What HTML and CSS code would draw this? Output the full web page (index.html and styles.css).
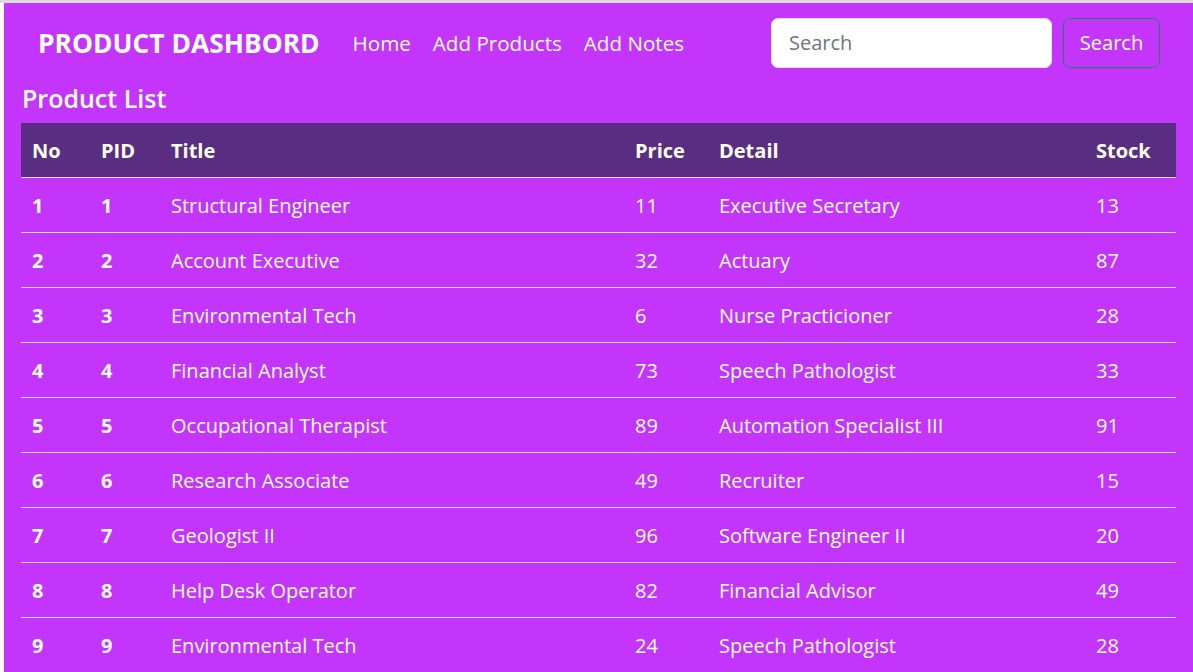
FILE: index.html
```html
<!DOCTYPE html>
<html>
<head>
<meta charset="utf-8">
<link rel="stylesheet" href="styles.css">
</head>
<body>
<div class="topline"></div>
<div class="page">
  <nav class="navbar">
    <a class="brand">PRODUCT DASHBORD</a>
    <ul class="links">
      <li>Home</li>
      <li>Add Products</li>
      <li>Add Notes</li>
    </ul>
    <form class="search">
      <input class="search-input" type="text" placeholder="Search">
      <button class="search-btn" type="button">Search</button>
    </form>
  </nav>
  <h2 class="title">Product List</h2>
  <table class="products">
    <thead>
      <tr><th class="c-no">No</th><th class="c-pid">PID</th><th class="c-title">Title</th><th class="c-price">Price</th><th class="c-detail">Detail</th><th class="c-stock">Stock</th></tr>
    </thead>
    <tbody>
      <tr><td class="b">1</td><td class="b">1</td><td>Structural Engineer</td><td>11</td><td>Executive Secretary</td><td>13</td></tr>
      <tr><td class="b">2</td><td class="b">2</td><td>Account Executive</td><td>32</td><td>Actuary</td><td>87</td></tr>
      <tr><td class="b">3</td><td class="b">3</td><td>Environmental Tech</td><td>6</td><td>Nurse Practicioner</td><td>28</td></tr>
      <tr><td class="b">4</td><td class="b">4</td><td>Financial Analyst</td><td>73</td><td>Speech Pathologist</td><td>33</td></tr>
      <tr><td class="b">5</td><td class="b">5</td><td>Occupational Therapist</td><td>89</td><td>Automation Specialist III</td><td>91</td></tr>
      <tr><td class="b">6</td><td class="b">6</td><td>Research Associate</td><td>49</td><td>Recruiter</td><td>15</td></tr>
      <tr><td class="b">7</td><td class="b">7</td><td>Geologist II</td><td>96</td><td>Software Engineer II</td><td>20</td></tr>
      <tr><td class="b">8</td><td class="b">8</td><td>Help Desk Operator</td><td>82</td><td>Financial Advisor</td><td>49</td></tr>
      <tr><td class="b">9</td><td class="b">9</td><td>Environmental Tech</td><td>24</td><td>Speech Pathologist</td><td>28</td></tr>
    </tbody>
  </table>
</div>
</body>
</html>
```
FILE: styles.css
```css
* { box-sizing: border-box; }
html, body { margin: 0; padding: 0; }
body {
  background: #ffffff;
  font-family: "Open Sans", "Noto Sans", sans-serif;
  color: #fff;
  overflow: hidden;
  height: 672px;
}
.topline { height: 3px; background: #dcdcdc; }
.page {
  margin-left: 4px;
  background: #c435fc;
  height: 669px;
  padding: 0 17px;
}
.navbar {
  display: flex;
  align-items: center;
  height: 81px;
  padding: 0 16px 2px 17px;
}
.brand {
  font-size: 26.4px;
  font-weight: 700;
  margin-right: 33px;
}
.links {
  display: flex;
  gap: 22px;
  list-style: none;
  margin: 0;
  padding: 0;
  font-size: 20.6px;
  flex: 1;
}
.search { display: flex; gap: 11px; margin: 0; }
.search-input {
  width: 281px;
  height: 50px;
  border: 1px solid #dee2e6;
  border-radius: 7px;
  padding: 0 17px;
  font-family: inherit;
  font-size: 20px;
  color: #212529;
  outline: none;
}
.search-input::placeholder { color: #6c757d; }
.search-btn {
  width: 97px;
  height: 50px;
  background: transparent;
  border: 1px solid #198754;
  border-radius: 7px;
  color: #fff;
  font-family: inherit;
  font-size: 20px;
  padding: 0;
}
.title {
  margin: 0;
  font-size: 25px;
  font-weight: 600;
  height: 39px;
  line-height: 28px;
  padding-left: 1px;
}
.products {
  width: 1155px;
  border-collapse: collapse;
  table-layout: fixed;
  font-size: 20px;
}
.products th, .products td {
  text-align: left;
  padding: 2px 0 0 11px;
  white-space: nowrap;
}
.products thead tr {
  background: #592e82;
  height: 54px;
  border-bottom: 1px solid #e8d5f2;
}
.products th { font-weight: 700; }
.products tbody tr { height: 55px; border-bottom: 1px solid #e8d5f2; }
.products td.b { font-weight: 700; }
.c-no { width: 69px; }
.c-pid { width: 70px; }
.c-title { width: 464px; }
.c-price { width: 84px; }
.c-detail { width: 377px; }
.c-stock { width: 91px; }
```
